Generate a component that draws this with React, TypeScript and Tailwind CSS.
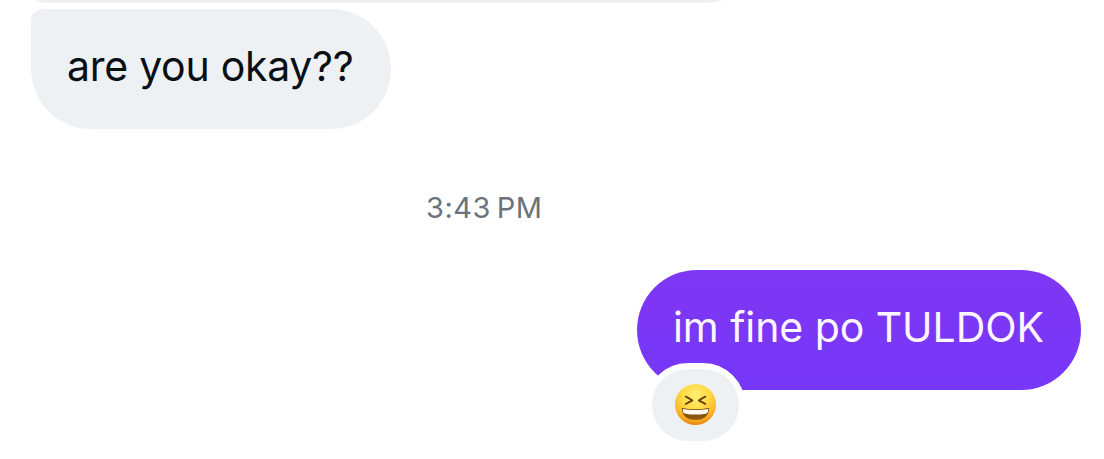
const REACTION_LABEL = "Reaction: laughing";

function LaughingFace() {
  return (
    <svg className="h-[42px] w-[42px]" viewBox="0 0 42 42" fill="none" role="img" aria-label={REACTION_LABEL}>
      <defs>
        <radialGradient id="face" cx="0.5" cy="0.3" r="0.72">
          <stop offset="0" stopColor="#fff07a" />
          <stop offset="0.45" stopColor="#ffdc45" />
          <stop offset="0.78" stopColor="#fbb428" />
          <stop offset="1" stopColor="#e4800c" />
        </radialGradient>
        <linearGradient id="mouth" x1="0" y1="0" x2="0" y2="1">
          <stop offset="0" stopColor="#6b3d08" />
          <stop offset="1" stopColor="#96600f" />
        </linearGradient>
      </defs>
      <circle cx="20.5" cy="20.5" r="20.5" fill="url(#face)" />
      {/* squinting eyes */}
      <path d="M10.8 12.6 Q14 14.2 17.4 16.6 Q14 17.8 10.8 20" stroke="#6b3d0a" strokeWidth="1.8" strokeLinecap="round" strokeLinejoin="round" />
      <path d="M30.4 12.6 Q27.2 14.2 23.8 16.6 Q27.2 17.8 30.4 20" stroke="#6b3d0a" strokeWidth="1.8" strokeLinecap="round" strokeLinejoin="round" />
      {/* open mouth with the upper teeth */}
      <path d="M6.8 24 Q20.5 26.6 34.2 24 Q33.6 36 20.5 36 Q7.4 36 6.8 24Z" fill="url(#mouth)" />
      <path d="M7.6 24.9 Q20.5 27.2 33.4 24.9 Q33.4 28 31.6 29.4 Q20.5 31.8 9.4 29.4 Q7.6 28 7.6 24.9Z" fill="#fffaf0" />
    </svg>
  );
}

export default function App() {
  return (
    <main className="flex h-[459px] w-[1104px] flex-col overflow-hidden bg-white font-['Inter',sans-serif]">
      {/* End of the previous message */}
      <div className="ml-[31px] h-[3px] w-[734px] shrink-0 overflow-hidden">
        <div className="-mt-[117px] h-[120px] rounded-[60px] rounded-bl-[12px] bg-[#edf1f4]" />
      </div>

      {/* Incoming */}
      <div className="mt-1.5 ml-[31px] flex h-[120px] w-[360px] shrink-0 items-center rounded-[60px] rounded-tl-[12px] bg-[#edf1f4] pb-1.5 pl-9">
        <p className="text-[41px] leading-none tracking-[-0.27px] whitespace-nowrap text-[#0a0f14]">are you okay??</p>
      </div>

      <time className="mt-16 ml-[426px] h-[30px] text-[29px] leading-[30px] tracking-[0.5px] whitespace-nowrap text-[#6b727b]">
        3:43&#8239;PM
      </time>

      {/* Outgoing */}
      <div className="relative mt-[47px] mr-[23px] flex h-[120px] w-[444px] shrink-0 items-center self-end rounded-full bg-linear-to-b from-[#7f37f3] to-[#7637f9] pb-1.5 pl-9">
        <p className="text-[41px] leading-none tracking-[-0.06px] whitespace-nowrap text-[#fdf5ff]">im fine po TULDOK</p>
        <div className="absolute top-[93px] left-[9px] flex h-[84px] w-[99px] items-center justify-center rounded-[42px] border-6 border-white bg-[#edf1f4]">
          <LaughingFace />
        </div>
      </div>
    </main>
  );
}
